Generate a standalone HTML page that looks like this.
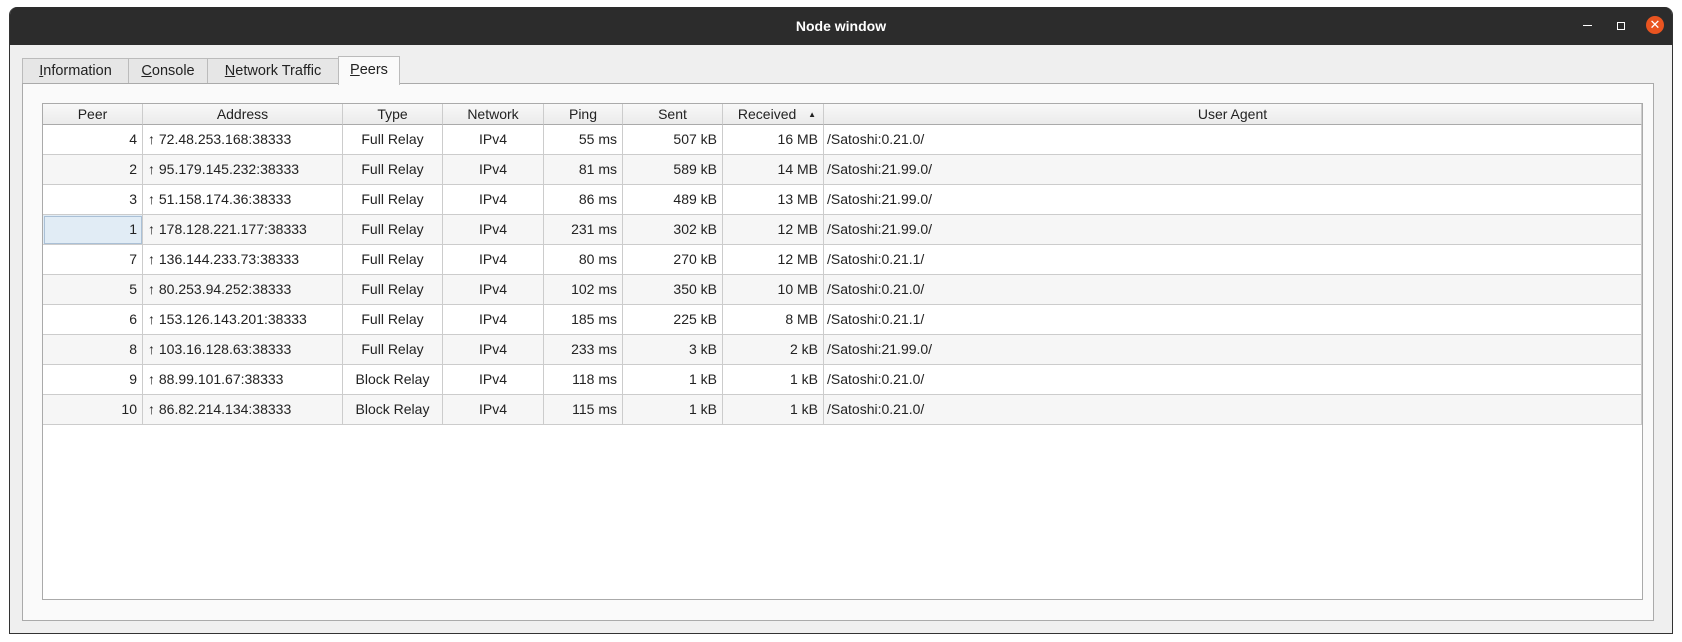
<!DOCTYPE html>
<html><head><style>
body{margin:0;width:1682px;height:642px;background:#fff;font-family:"Liberation Sans",sans-serif;font-size:14px;color:#222;position:relative;overflow:hidden}
.win{position:absolute;left:9px;top:7px;width:1662px;height:626px;background:#efefef;border:1px solid #333;border-top:none;border-radius:8px 8px 0 0;overflow:hidden}
.title{position:absolute;left:0;top:0;width:100%;height:38px;background:#2c2c2c;color:#fff;font-weight:bold;text-align:center;line-height:38px;font-size:14px}
.tab{position:absolute;top:51px;height:25px;background:#e6e6e6;border:1px solid #bbb;border-bottom:none;line-height:25px;text-align:center;font-size:14.5px}
.pane{position:absolute;left:12px;top:76px;width:1630px;height:536px;background:#fafafa;border:1px solid #aaa}
.tbl{position:absolute;left:19px;top:19px;width:1599px;height:495px;background:#fff;border:1px solid #aaa}
.c{position:absolute;height:29px;line-height:29px;border-right:1px solid #ccc;border-bottom:1px solid #ccc;box-sizing:border-box;padding:0 5px;white-space:nowrap}
.h{height:21px;line-height:21px;background:linear-gradient(#f8f8f8,#ebebeb);border-bottom:1px solid #aaa;text-align:center;border-right:1px solid #ccc}
u{text-decoration:underline}
</style></head><body>
<div class="win">
<div class="title">Node window</div>
<div style="position:absolute;left:1573px;top:18px;width:9px;height:1px;background:#fff"></div>
<div style="position:absolute;left:1607px;top:15px;width:6px;height:6px;border:1.5px solid #fff"></div>
<div style="position:absolute;left:1636px;top:9px;width:18px;height:18px;border-radius:50%;background:#e95420;color:#fff;text-align:center;line-height:18px;font-size:13px">✕</div>
<div class="tab" style="left:12px;width:105px"><u>I</u>nformation</div>
<div class="tab" style="left:118px;width:78px"><u>C</u>onsole</div>
<div class="tab" style="left:197px;width:130px"><u>N</u>etwork Traffic</div>
<div class="tab" style="left:328px;width:60px;top:49px;height:28px;background:#fafafa;z-index:2;line-height:27px"><u>P</u>eers</div>
<div class="pane"><div class="tbl" id="t"></div></div>
</div>
<script>
var cols=[[0,100,'Peer','r'],[100,200,'Address','l'],[300,100,'Type','c'],[400,101,'Network','c'],[501,79,'Ping','r'],[580,100,'Sent','r'],[680,101,'Received','r'],[781,818,'User Agent','l']];
var rows=[[4,'72.48.253.168:38333','Full Relay',55,'507 kB','16 MB','/Satoshi:0.21.0/'],[2,'95.179.145.232:38333','Full Relay',81,'589 kB','14 MB','/Satoshi:21.99.0/'],[3,'51.158.174.36:38333','Full Relay',86,'489 kB','13 MB','/Satoshi:21.99.0/'],[1,'178.128.221.177:38333','Full Relay',231,'302 kB','12 MB','/Satoshi:21.99.0/'],[7,'136.144.233.73:38333','Full Relay',80,'270 kB','12 MB','/Satoshi:0.21.1/'],[5,'80.253.94.252:38333','Full Relay',102,'350 kB','10 MB','/Satoshi:0.21.0/'],[6,'153.126.143.201:38333','Full Relay',185,'225 kB','8 MB','/Satoshi:0.21.1/'],[8,'103.16.128.63:38333','Full Relay',233,'3 kB','2 kB','/Satoshi:21.99.0/'],[9,'88.99.101.67:38333','Block Relay',118,'1 kB','1 kB','/Satoshi:0.21.0/'],[10,'86.82.214.134:38333','Block Relay',115,'1 kB','1 kB','/Satoshi:0.21.0/']];
var h='';
cols.forEach(function(c,i){h+='<div class="c h" style="left:'+c[0]+'px;width:'+c[1]+'px;top:0">'+c[2]+(i==6?' <span style="font-size:8px;position:relative;left:8px;top:-2px">▲</span>':'')+'</div>';});
rows.forEach(function(r,j){var top=21+j*30;var bg=j%2?'#f6f6f6':'#fff';
var v=[r[0],'↑ '+r[1],r[2],'IPv4',r[3]+' ms',r[4],r[5],r[6]];
cols.forEach(function(c,i){var al=c[3]=='r'?'right':c[3]=='c'?'center':'left';var b=bg,ex='';
if(j==3&&i==0){b='#e1ecf5';ex='outline:1px solid #aac0d6;outline-offset:-2px;';}
h+='<div class="c" style="left:'+c[0]+'px;width:'+c[1]+'px;top:'+top+'px;height:30px;line-height:29px;background:'+b+';text-align:'+al+';'+ex+(i==7?'padding-left:3px;':'')+'">'+v[i]+'</div>';});});
document.getElementById('t').innerHTML=h;
</script>
</body></html>
